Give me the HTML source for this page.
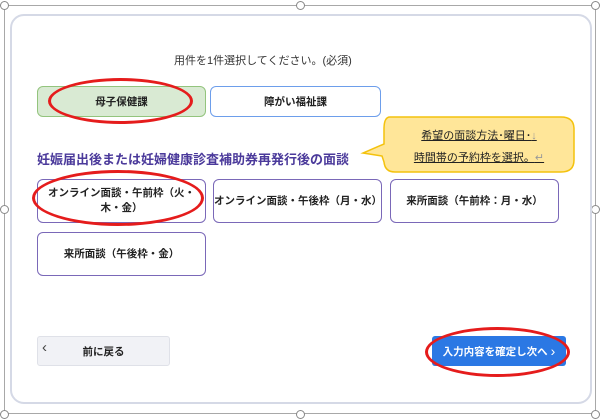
<!DOCTYPE html>
<html><head><meta charset="utf-8"><style>
*{box-sizing:border-box;margin:0;padding:0}
body{width:600px;height:420px;background:#fff;position:relative;overflow:hidden;font-family:"Liberation Sans","Noto Sans CJK JP",sans-serif;color:#222}
.a{position:absolute}
.frame{left:4px;top:5px;width:592px;height:409px;border:1px solid #a8a8a8}
.h{width:9px;height:9px;border:1px solid #888;border-radius:50%;background:#fff}
.card{left:10px;top:14px;width:582px;height:390px;border:2px solid #d5d9e6;border-radius:14px;background:#fff}
.btn{display:flex;align-items:center;justify-content:center;text-align:center;font-size:10.5px;font-weight:bold;border-radius:6px}
.opt{border:1.3px solid #7a68b8;background:#fff;height:44px;width:169px;line-height:15px}
.ell{border:3px solid #e51c1c;border-radius:50%}
</style></head><body>
<div class="a frame"></div>
<div class="a h" style="left:0;top:1px"></div>
<div class="a h" style="left:296px;top:1px"></div>
<div class="a h" style="left:591px;top:1px"></div>
<div class="a h" style="left:0;top:205px"></div>
<div class="a h" style="left:591px;top:205px"></div>
<div class="a h" style="left:0;top:410px"></div>
<div class="a h" style="left:296px;top:410px"></div>
<div class="a h" style="left:591px;top:410px"></div>
<div class="a card"></div>
<div class="a" style="left:174px;top:52px;font-size:11px;color:#333">用件を1件選択してください。(必須)</div>
<div class="a btn" style="left:37px;top:86px;width:169px;height:31px;background:#d9ead3;border:1.3px solid #93c47d">母子保健課</div>
<div class="a btn" style="left:210px;top:86px;width:171px;height:31px;border:1.3px solid #6d9eeb;background:#fff">障がい福祉課</div>
<svg class="a" style="left:360px;top:114px" width="218" height="62"><path d="M30 3 H201 Q214 3 214 15 V46 Q214 58 201 58 H35 Q25 58 24 48 L22 42 L3 39 L24 30 V15 Q24 3 30 3Z" fill="#ffe699" stroke="#f4c20d" stroke-width="1.5"/></svg>
<div class="a" style="left:393px;top:125px;width:172px;text-align:center;font-size:11px;line-height:22px;text-decoration:underline;color:#222">希望の面談方法･曜日･<span style="color:#999;text-decoration:none">↓</span><br>時間帯の予約枠を選択。<span style="color:#999;text-decoration:none">↵</span></div>
<div class="a" style="left:37px;top:149px;font-size:13px;font-weight:bold;color:#4b3a9b">妊娠届出後または妊婦健康診査補助券再発行後の面談</div>
<div class="a btn opt" style="left:37px;top:179px">オンライン面談・午前枠（火・<br>木・金）</div>
<div class="a btn opt" style="left:213px;top:179px">オンライン面談・午後枠（月・水）</div>
<div class="a btn opt" style="left:390px;top:179px">来所面談（午前枠：月・水）</div>
<div class="a btn opt" style="left:37px;top:232px">来所面談（午後枠・金）</div>
<div class="a btn" style="left:37px;top:336px;width:133px;height:30px;background:#f1f2f6;border:1px solid #dfe1e8;border-radius:3px;font-weight:bold">前に戻る</div>
<div class="a" style="left:42px;top:339px;font-size:15px;color:#444">‹</div>
<div class="a btn" style="left:432px;top:336px;width:134px;height:30px;background:#2b78e4;color:#fff;border-radius:3px">入力内容を確定し次へ <span style="font-size:14px;font-weight:normal;margin-left:3px">›</span></div>
<div class="a ell" style="left:48px;top:78px;width:145px;height:46px"></div>
<div class="a ell" style="left:32px;top:170px;width:172px;height:56px"></div>
<div class="a ell" style="left:425px;top:327px;width:145px;height:50px"></div>
</body></html>
